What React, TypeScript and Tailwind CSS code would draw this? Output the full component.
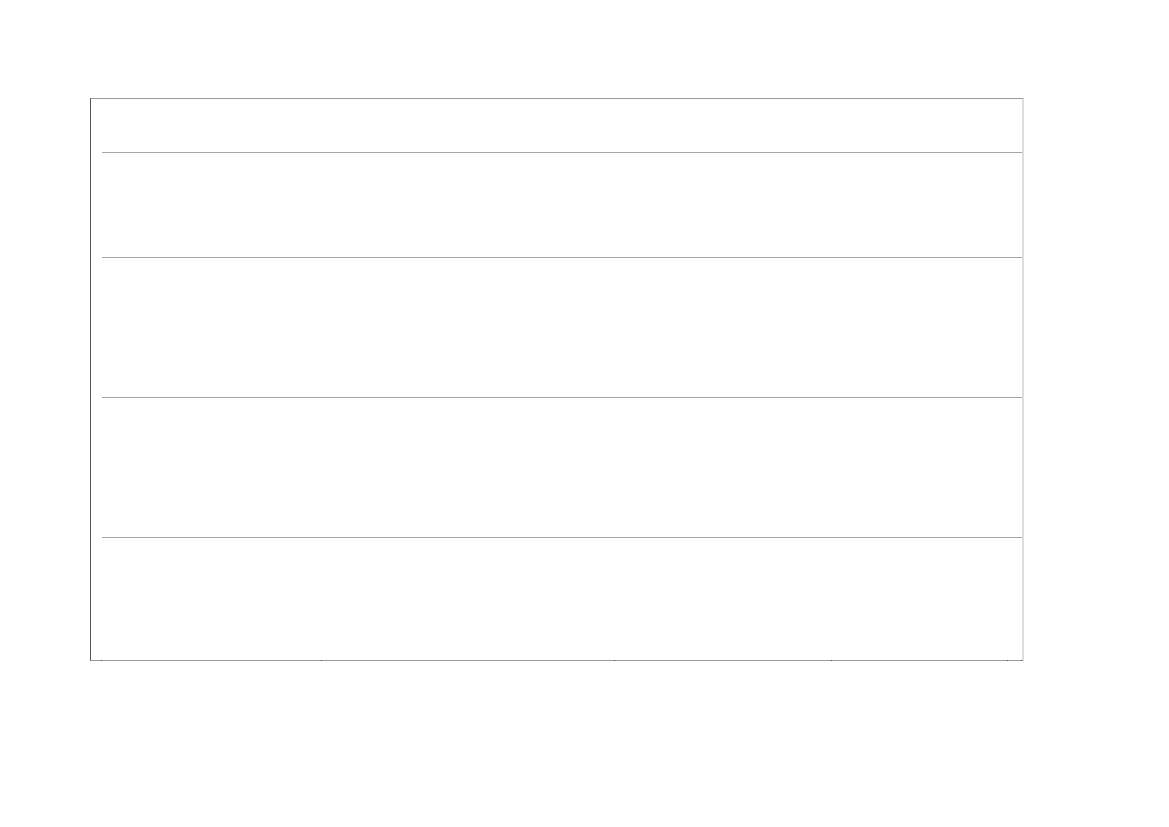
import React from "react";

const rows = [53, 104, 139, 139];
const ticks = [101, 321, 614, 831, 1007, 1021];

const App: React.FC = () => {
  return (
    <div className="w-[1169px] h-[827px] bg-white pt-[98px] pl-[90px]" style={{ fontFamily: '"Liberation Sans", sans-serif' }}>
      <div className="relative w-[934px] h-[563px] flex flex-col border-l border-l-[#555555] border-t border-t-[#9a9a9a] border-b border-b-[#9a9a9a] border-r-2 border-r-[#dddddd]">
        {rows.map((h, i) => (
          <div key={i} className="flex flex-col">
            <div style={{ height: h }} />
            <div className="ml-[11px] h-px bg-[#a6a6a6]" />
          </div>
        ))}
        <div className="flex-1" />
        {ticks.map((x) => (
          <div
            key={x}
            className="absolute bottom-[-1px] w-px h-px bg-[#555555]"
            style={{ left: x - 91 }}
          />
        ))}
      </div>
    </div>
  );
};

export default App;
